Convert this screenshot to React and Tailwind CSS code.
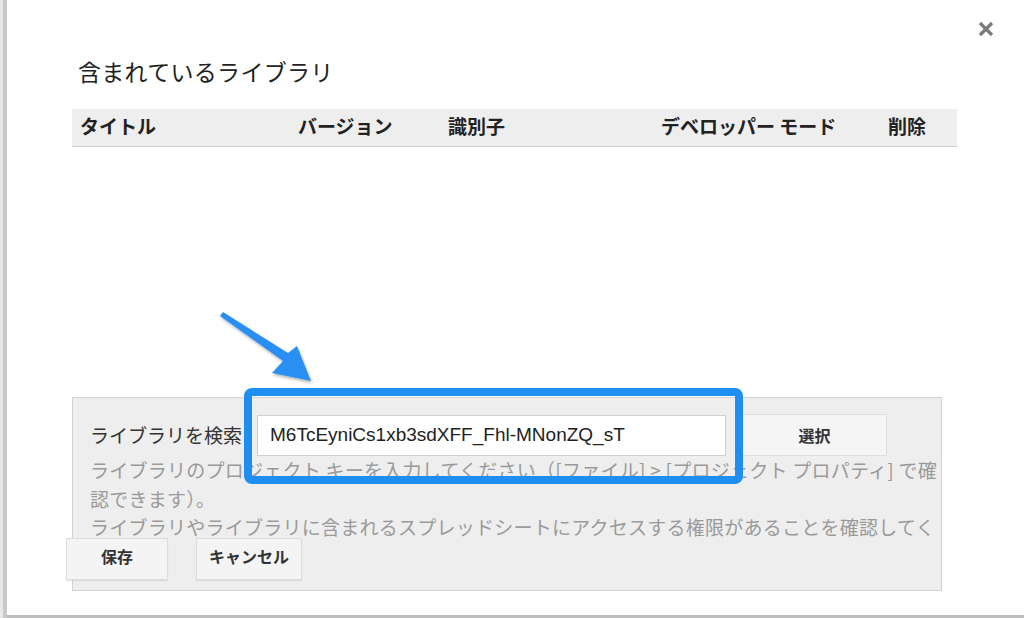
import React from "react";

const jp = { fontFamily: '"Noto Sans CJK JP", "Noto Sans", sans-serif' };

export default function App() {
  return (
    <div className="relative w-[1024px] h-[618px] overflow-hidden bg-white" style={jp}>
      <div className="flex h-full">
        <div className="w-[3px] bg-[#e8e8e8]" />
        <div className="w-[4px] bg-[#c9c9c9]" />
        <div className="flex-1 flex flex-col border-b-[3px] border-[#bdbdbd] pl-[65px]">
          <h1 className="mt-[54px] ml-[6px] h-[34px] text-[23px] leading-[34px] text-[#222] font-normal tracking-[0.3px]">
            含まれているライブラリ
          </h1>
          <div className="mt-[21px] w-[885px] h-[38px] bg-[#eeeeee] border-b border-[#cfcfcf] grid grid-cols-[218px_150px_213px_227px_1fr] pl-[8px] items-center text-[19px] leading-[30px] pb-[3px] font-bold text-[#222]">
            <span>タイトル</span>
            <span>バージョン</span>
            <span>識別子</span>
            <span>デベロッパー モード</span>
            <span>削除</span>
          </div>
          <div className="h-[250px]" />
          <div className="relative w-[870px] h-[194px] bg-[#eeeeee] border border-[#d2d2d2] pl-[17px] pt-[16px] overflow-hidden">
            <div className="flex items-center h-[42px]">
              <span className="w-[167px] text-[19px] text-[#333] whitespace-nowrap">ライブラリを検索</span>
              <div className="w-[469px] h-[41px] bg-white border border-[#cfcfcf] flex items-center pl-[12px] text-[19px] text-[#222]" style={{ fontFamily: '"Liberation Sans", Arial, sans-serif' }}>
                M6TcEyniCs1xb3sdXFF_Fhl-MNonZQ_sT
              </div>
              <div className="ml-[16px] w-[145px] h-[42px] bg-[#f5f5f5] border border-[#dedede] flex items-center justify-center text-[16px] font-bold text-[#333]">
                選択
              </div>
            </div>
            <div className="text-[19px] leading-[28.5px] text-[#9a9a9a] whitespace-nowrap tracking-[0.25px]">
              ライブラリのプロジェクト キーを入力してください（[ファイル] &gt; [プロジェクト プロパティ] で確
              <br />
              認できます）。
              <br />
              ライブラリやライブラリに含まれるスプレッドシートにアクセスする権限があることを確認してく
            </div>
          </div>
        </div>
      </div>

      {/* Save / Cancel buttons overlapping the panel */}
      <div className="absolute left-[66px] top-[538px] flex gap-[28px]">
        <div className="w-[102px] h-[42px] pb-[6px] bg-[#f4f4f4] border border-[#dcdcdc] flex items-center justify-center text-[16px] font-bold text-[#333] shadow-[0_1px_1px_rgba(0,0,0,0.08)]">
          保存
        </div>
        <div className="w-[106px] h-[42px] pb-[6px] bg-[#f4f4f4] border border-[#dcdcdc] flex items-center justify-center text-[16px] font-bold text-[#333] shadow-[0_1px_1px_rgba(0,0,0,0.08)]">
          キャンセル
        </div>
      </div>

      {/* Close X */}
      <svg className="absolute left-[978px] top-[21px]" width="16" height="16" viewBox="0 0 16 16">
        <path d="M2 2 L14 14 M14 2 L2 14" stroke="#7a7a7a" strokeWidth="3.2" strokeLinecap="butt" />
      </svg>

      {/* Blue highlight box */}
      <div className="absolute left-[244px] top-[388px] w-[499px] h-[96px] border-[8px] border-[#1f8ef1] rounded-[8px]" />

      {/* Arrow */}
      <svg className="absolute left-[210px] top-[305px]" width="120" height="90" viewBox="210 305 120 90">
        <defs>
          <filter id="sh" x="-20%" y="-20%" width="140%" height="140%">
            <feDropShadow dx="1" dy="2" stdDeviation="1.5" floodColor="#000" floodOpacity="0.3" />
          </filter>
        </defs>
        <polygon
          filter="url(#sh)"
          fill="#2a8ff2"
          points="220,316 223,312 288,353 297,346 311,381 272,373 283,361"
        />
      </svg>
    </div>
  );
}
